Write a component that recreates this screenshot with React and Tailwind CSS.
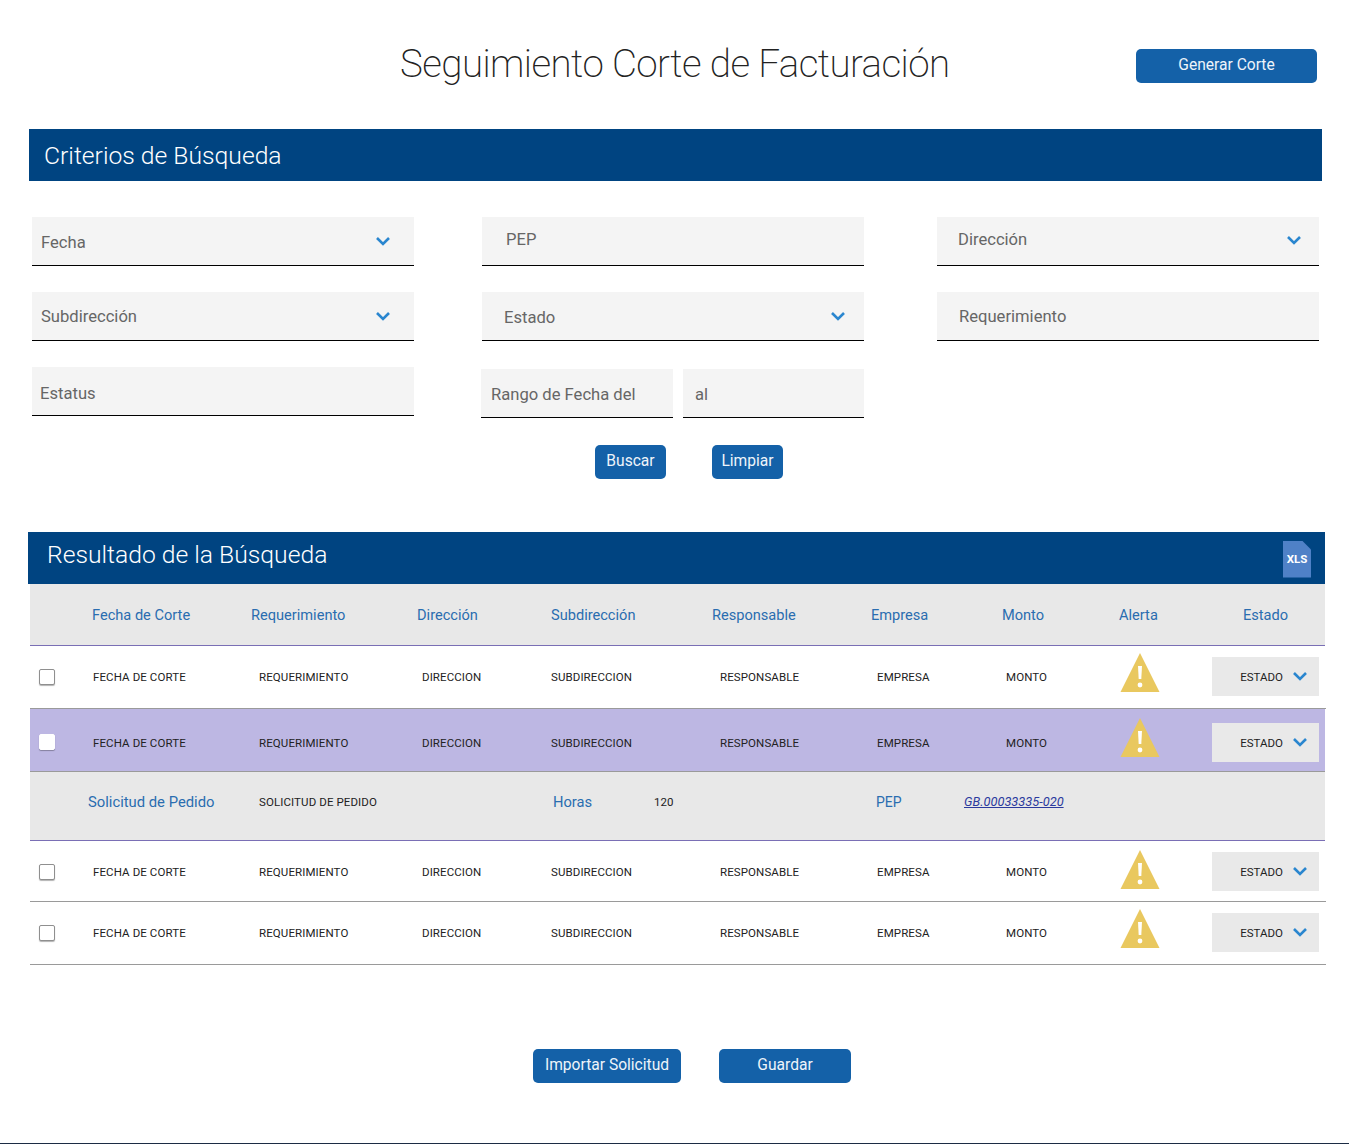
const font = "font-['Roboto','Liberation_Sans',sans-serif]"

const Chevron = ({ className = '' }) => (
  <svg width="16" height="11" viewBox="0 0 16 11" fill="none" className={className}>
    <path d="M2 2l6 6 6-6" stroke="#2a86cf" strokeWidth="2.6" />
  </svg>
)

const Warning = () => (
  <svg width="40" height="40" viewBox="0 0 40 40" className="block">
    <path d="M20 0L39.5 39H.5z" fill="#e9c85f" />
    <path d="M18 13h4l-.7 13h-2.6z" fill="#fff" />
    <circle cx="20" cy="32" r="2.4" fill="#fff" />
  </svg>
)

const Button = ({ children, className = '' }) => (
  <button className={`h-[34px] rounded-[5px] bg-[#1461a8] text-[15.6px] text-[#eef4fa] ${className}`}>
    {children}
  </button>
)

const Banner = ({ children, className = '' }) => (
  <div className={`h-[52px] bg-[#004481] flex items-center text-white font-light ${className}`}>
    {children}
  </div>
)

const Field = ({ label, select, className = 'w-[382px] h-[49px]', pad = 'pl-[10px]', chevronPad = 'pr-[23px]', shift = '' }) => (
  <div className={`bg-[#f4f4f4] border-b border-black flex items-center justify-between ${pad} ${chevronPad} ${className}`}>
    <span className={`text-[16.6px] text-[#666] ${shift}`}>{label}</span>
    {select && <Chevron />}
  </div>
)

const headers = [
  ['Fecha de Corte', 'w-[159px]'],
  ['Requerimiento', 'w-[166px]'],
  ['Dirección', 'w-[134px]'],
  ['Subdirección', 'w-[161px]'],
  ['Responsable', 'w-[159px]'],
  ['Empresa', 'w-[131px]'],
  ['Monto', 'w-[117px]'],
  ['Alerta', 'w-[124px]'],
  ['Estado', 'w-[70px]'],
]

// the mt/mb values nudge each part of a row to where the picture has it
const Row = ({ highlight, height, text = '', check = '', icon = '', box = '' }) => {
  const cell = `text-[11.5px] tracking-[0.1px] text-[#222] ${text}`
  return (
    <div className={`flex items-center border-b border-[#9a9a9a] ${height} ${highlight ? 'bg-[#bdb7e3] w-[1295px]' : ''}`}>
      <div className={`w-[63px] pl-[9px] ${check}`}>
        <input
          type="checkbox"
          className={`block appearance-none w-[16px] h-[16px] rounded-[2px] border border-[#8f8f8f] shadow-[0_1px_1px_rgba(0,0,0,0.3)] ${highlight ? 'bg-white border-white' : 'bg-white'}`}
        />
      </div>
      <div className={`w-[166px] ${cell}`}>FECHA DE CORTE</div>
      <div className={`w-[163px] ${cell}`}>REQUERIMIENTO</div>
      <div className={`w-[129px] ${cell}`}>DIRECCION</div>
      <div className={`w-[169px] ${cell}`}>SUBDIRECCION</div>
      <div className={`w-[157px] ${cell}`}>RESPONSABLE</div>
      <div className={`w-[129px] ${cell}`}>EMPRESA</div>
      <div className={`w-[114px] ${cell}`}>MONTO</div>
      <div className={`w-[92px] ${icon}`}><Warning /></div>
      <div className={`w-[107px] h-[39px] bg-[#e9e9e9] flex items-center justify-end pr-[11px] gap-[9px] ${box}`}>
        <span className="mt-[4px] text-[11.5px] text-[#222]">ESTADO</span>
        <Chevron />
      </div>
    </div>
  )
}

export default function App() {
  return (
    <div className={`w-[1349px] h-[1144px] bg-white border-b border-[#1c2c44] ${font}`}>
      {/* Title */}
      <div className="h-[129px] flex items-start">
        <h1 className="ml-[400px] mt-[41px] w-[736px] text-[38.5px] leading-[46px] font-extralight tracking-[-0.57px] text-[#222]">
          Seguimiento Corte de Facturación
        </h1>
        <Button className="w-[181px] mt-[49px]">Generar Corte</Button>
      </div>

      {/* Criterios */}
      <Banner className="ml-[29px] w-[1293px] pl-[15px] text-[24.7px]">
        <span className="mt-[1px]">Criterios de Búsqueda</span>
      </Banner>

      <div className="mt-[36px] ml-[32px] flex">
        <div className="w-[450px] flex flex-col gap-[26px]">
          <Field label="Fecha" select shift="mt-[4px]" pad="pl-[9px]" />
          <Field label="Subdirección" select shift="mt-[2px]" pad="pl-[9px]" />
          <Field label="Estatus" pad="pl-[8px]" shift="mt-[6px]" />
        </div>
        <div className="w-[455px] flex flex-col gap-[26px]">
          <Field label="PEP" pad="pl-[24px]" shift="-mt-[1px]" />
          <Field label="Estado" select pad="pl-[22px]" chevronPad="pr-[18px]" shift="mt-[4px]" />
          <div className="flex gap-[10px] -ml-[1px] mt-[2px]">
            <Field label="Rango de Fecha del" className="w-[192px] h-[49px]" shift="mt-[4px]" />
            <Field label="al" className="w-[181px] h-[49px]" pad="pl-[12px]" shift="mt-[4px]" />
          </div>
        </div>
        <div className="w-[382px] flex flex-col gap-[26px]">
          <Field label="Dirección" select pad="pl-[21px] pb-[2px]" chevronPad="pr-[17px]" />
          <Field label="Requerimiento" pad="pl-[22px]" shift="mt-[2px]" />
        </div>
      </div>

      <div className="mt-[27px] ml-[595px] flex gap-[46px]">
        <Button className="w-[71px]">Buscar</Button>
        <Button className="w-[71px]">Limpiar</Button>
      </div>

      {/* Resultado */}
      <Banner className="mt-[53px] ml-[28px] w-[1297px] pl-[19px] pr-[14px] justify-between text-[24.7px]">
        <span className="-mt-[6px]">Resultado de la Búsqueda</span>
        <div className="w-[28px] h-[37px] mt-[2px] bg-[#4f81c7] flex items-end justify-center pb-[12px] text-[11.5px] leading-none font-bold text-white [clip-path:polygon(0_0,68%_0,100%_24%,100%_100%,0_100%)]">
          XLS
        </div>
      </Banner>

      <div className="ml-[30px] w-[1296px]">
        <div className="h-[62px] w-[1295px] bg-[#e8e8e8] border-b border-[#7a6fb5] flex items-center pl-[62px] -mb-px">
          {headers.map(([label, width]) => (
            <div key={label} className={`${width} mt-[2px] text-[14.6px] text-[#2a6db0]`}>{label}</div>
          ))}
        </div>
        <div className="h-px" />
        <Row height="h-[63px]" text="mt-[2px]" icon="-mt-[9px]" box="-mt-[2px]" />
        <Row height="h-[63px]" highlight text="mt-[8px]" check="mt-[3px]" icon="-mt-[5px]" box="mt-[4px]" />
        <div className="h-[69px] bg-[#e8e8e8] w-[1295px] border-b border-[#7a6fb5] flex items-center pb-[7px]">
          <div className="ml-[58px] w-[171px] text-[14.8px] text-[#2a6db0]">Solicitud de Pedido</div>
          <div className="w-[294px] text-[11.5px] tracking-[0.1px] text-[#222]">SOLICITUD DE PEDIDO</div>
          <div className="w-[101px] text-[14.7px] text-[#2a6db0]">Horas</div>
          <div className="w-[222px] text-[11.5px] text-[#222]">120</div>
          <div className="w-[88px] text-[14px] text-[#2a6db0]">PEP</div>
          <a className="text-[12.8px] -mt-[1px] italic underline text-[#2b3a9e]">GB.00033335-020</a>
        </div>
        <Row height="h-[61px]" text="mt-[4px]" check="mt-[2px]" icon="-mt-[3px]" />
        <Row height="h-[63px]" text="mt-[2px]" icon="-mt-[9px]" box="-mt-[2px]" />
      </div>

      <div className="mt-[84px] ml-[533px] flex gap-[38px]">
        <Button className="w-[148px]">Importar Solicitud</Button>
        <Button className="w-[132px]">Guardar</Button>
      </div>
    </div>
  )
}
